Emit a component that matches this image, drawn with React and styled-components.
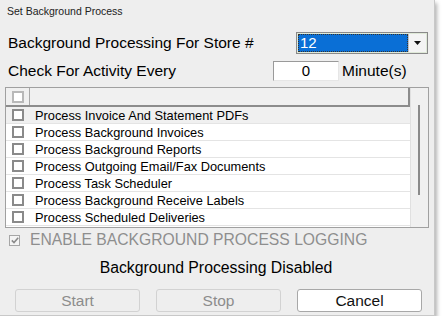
import React from 'react'
import styled, { createGlobalStyle } from 'styled-components'

const GlobalStyle = createGlobalStyle`
  html, body {
    margin: 0;
    padding: 0;
    background: #ffffff;
  }
  body {
    font-family: "Liberation Sans", Arial, sans-serif;
  }
`

const Window = styled.div`
  width: 434px;
  height: 315px;
  background: #eeeeee;
  border-right: 1px solid #c8c8c8;
  border-bottom: 1px solid #c8c8c8;
  box-shadow: 2px 3px 4px rgba(0, 0, 0, 0.3);
  display: flex;
  flex-direction: column;
  color: #000;
`

const Caption = styled.div`
  font-size: 10.5px;
  color: #222;
  padding: 5px 0 0 7px;
  height: 15px;
  line-height: 13px;
`

const FieldRow = styled.div`
  display: flex;
  align-items: center;
  height: ${({ h }) => h}px;
  margin-top: ${({ mt }) => mt}px;
  padding: 0 6px 0 8px;
  font-size: 15.5px;
`

const Label = styled.span`
  flex: 1;
`

const Unit = styled.span`
  width: 86px;
`

const Select = styled.div`
  width: 132px;
  height: 22px;
  box-sizing: border-box;
  border: 1px solid #8a8a8a;
  background: #dfe9d8;
  display: flex;
  padding: 1px;
`

const SelectValue = styled.div`
  flex: 1;
  background: #0a6fd6;
  color: #fff;
  outline: 1px dotted #333;
  outline-offset: -1px;
  font-size: 15px;
  line-height: 18px;
  padding-left: 2px;
`

const SelectArrow = styled.div`
  width: 17px;
  background: #f4f4f4;
  border-left: 1px solid #c0c0c0;
  display: flex;
  align-items: center;
  justify-content: center;
`

const NumberBox = styled.div`
  width: 66px;
  height: 20px;
  box-sizing: border-box;
  background: #fff;
  border-top: 1px solid #9a9a9a;
  border-left: 1px solid #9a9a9a;
  border-bottom: 1px solid #e6e6e6;
  border-right: 1px solid #e6e6e6;
  text-align: center;
  font-size: 15px;
  line-height: 18px;
  margin-right: 3px;
`

const ListBox = styled.div`
  margin: 5px 5px 0 5px;
  height: 141px;
  box-sizing: border-box;
  border: 1px solid #a0a0a0;
  background: #ffffff;
  display: flex;
`

const ListMain = styled.div`
  flex: 1;
  display: flex;
  flex-direction: column;
`

const HeaderRow = styled.div`
  display: flex;
  height: 19px;
  box-sizing: border-box;
  background: #f0f0f0;
  border-bottom: 2px solid #8c8c8c;
  border-right: 2px solid #8c8c8c;
`

const CheckCell = styled.div`
  width: 23px;
  display: flex;
  align-items: center;
  justify-content: center;
  border-right: ${({ divider }) => (divider ? '1px solid #a8a8a8' : 'none')};
`

const Box = styled.div`
  width: 12px;
  height: 12px;
  box-sizing: border-box;
  border: 2px solid ${({ light }) => (light ? '#b8b8b8' : '#8a8a8a')};
  background: #fff;
`

const Row = styled.div`
  display: flex;
  align-items: center;
  height: 17px;
  box-sizing: border-box;
  background: ${({ hot }) => (hot ? '#f0f0f0' : '#ffffff')};
  border-bottom: 1px solid #e4e4e4;
  font-size: 12.8px;
`

const RowText = styled.span`
  padding-left: 6px;
  white-space: nowrap;
`

const Scroll = styled.div`
  width: 18px;
  background: #f0f0f0;
  border-left: 1px solid #e0e0e0;
  padding-top: 17px;
  padding-left: 7px;
  box-sizing: border-box;
`

const Thumb = styled.div`
  width: 2px;
  height: 90px;
  background: #8a8a8a;
`

const LogRow = styled.div`
  display: flex;
  align-items: center;
  gap: 10px;
  padding-left: 9px;
  margin-top: 3px;
  height: 18px;
  font-size: 15.7px;
  color: #8e8e8e;
  white-space: nowrap;
`

const CheckedBox = styled.div`
  width: 11px;
  height: 11px;
  box-sizing: border-box;
  border: 1px solid #a6a6a6;
  background: #f4f4f4;
  display: flex;
  align-items: center;
  justify-content: center;
`

const Status = styled.div`
  text-align: center;
  font-size: 15.8px;
  margin-top: 10px;
  height: 18px;
  padding-right: 2px;
`

const Buttons = styled.div`
  display: flex;
  gap: 16px;
  padding: 0 12px 0 15px;
  margin-top: 12px;
`

const Button = styled.div`
  width: 125px;
  height: 23px;
  box-sizing: border-box;
  border-radius: 3px;
  border: 1px solid ${({ disabled }) => (disabled ? '#d2d2d2' : '#a8a8a8')};
  background: ${({ disabled }) => (disabled ? '#eeeeee' : '#ffffff')};
  color: ${({ disabled }) => (disabled ? '#8c8c8c' : '#111')};
  font-size: 15.5px;
  display: flex;
  align-items: center;
  justify-content: center;
`

const tasks = [
  'Process Invoice And Statement PDFs',
  'Process Background Invoices',
  'Process Background Reports',
  'Process Outgoing Email/Fax Documents',
  'Process Task Scheduler',
  'Process Background Receive Labels',
  'Process Scheduled Deliveries',
]

export default function App() {
  return (
    <>
      <GlobalStyle />
      <Window>
        <Caption>Set Background Process</Caption>
        <FieldRow h={24} mt={11}>
          <Label>Background Processing For Store #</Label>
          <Select>
            <SelectValue>12</SelectValue>
            <SelectArrow>
              <svg width="7" height="4" viewBox="0 0 7 4">
                <path d="M0 0h7L3.5 4z" fill="#111" />
              </svg>
            </SelectArrow>
          </Select>
        </FieldRow>
        <FieldRow h={22} mt={5}>
          <Label>Check For Activity Every</Label>
          <NumberBox>0</NumberBox>
          <Unit>Minute(s)</Unit>
        </FieldRow>
        <ListBox>
          <ListMain>
            <HeaderRow>
              <CheckCell divider>
                <Box light />
              </CheckCell>
            </HeaderRow>
            {tasks.map((t, i) => (
              <Row key={t} hot={i === 0}>
                <CheckCell>
                  <Box />
                </CheckCell>
                <RowText>{t}</RowText>
              </Row>
            ))}
          </ListMain>
          <Scroll>
            <Thumb />
          </Scroll>
        </ListBox>
        <LogRow>
          <CheckedBox>
            <svg width="8" height="7" viewBox="0 0 8 7">
              <path d="M0.8 3.4L3 5.6L7.2 0.8" stroke="#8a8a8a" strokeWidth="1.6" fill="none" />
            </svg>
          </CheckedBox>
          ENABLE BACKGROUND PROCESS LOGGING
        </LogRow>
        <Status>Background Processing Disabled</Status>
        <Buttons>
          <Button disabled>Start</Button>
          <Button disabled>Stop</Button>
          <Button>Cancel</Button>
        </Buttons>
      </Window>
    </>
  )
}
